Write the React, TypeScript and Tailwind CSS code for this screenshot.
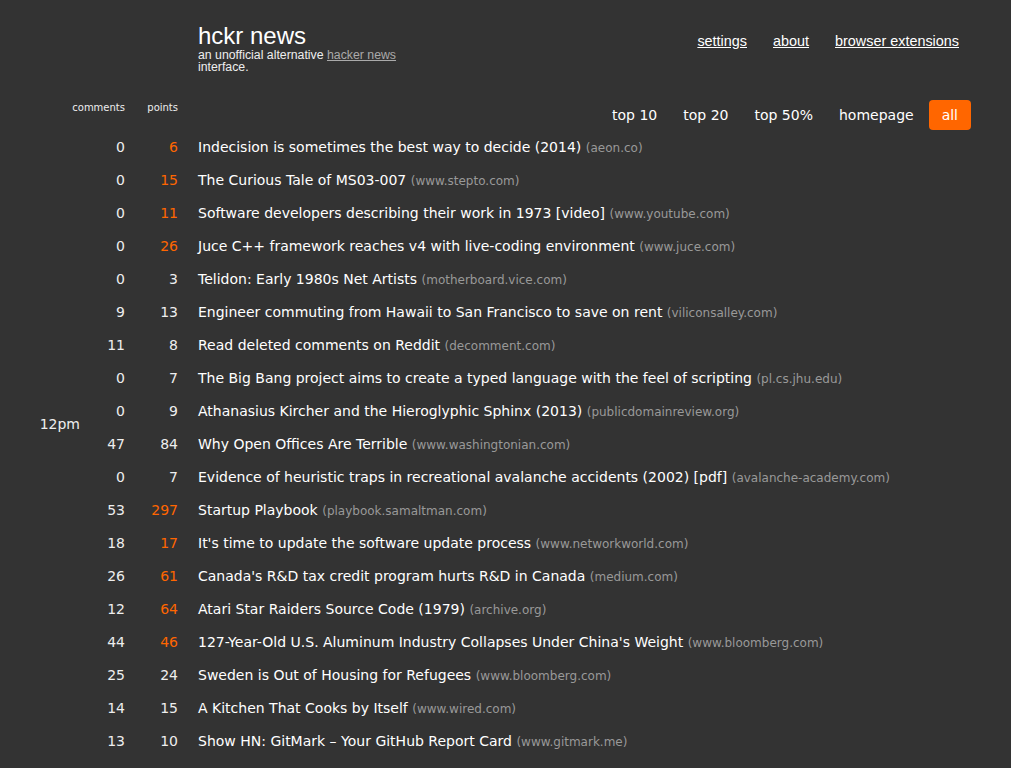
const stories = [
  { c: 0, p: 6, hot: true, t: "Indecision is sometimes the best way to decide (2014)", d: "aeon.co" },
  { c: 0, p: 15, hot: true, t: "The Curious Tale of MS03-007", d: "www.stepto.com" },
  { c: 0, p: 11, hot: true, t: "Software developers describing their work in 1973 [video]", d: "www.youtube.com" },
  { c: 0, p: 26, hot: true, t: "Juce C++ framework reaches v4 with live-coding environment", d: "www.juce.com" },
  { c: 0, p: 3, hot: false, t: "Telidon: Early 1980s Net Artists", d: "motherboard.vice.com" },
  { c: 9, p: 13, hot: false, t: "Engineer commuting from Hawaii to San Francisco to save on rent", d: "viliconsalley.com" },
  { c: 11, p: 8, hot: false, t: "Read deleted comments on Reddit", d: "decomment.com" },
  { c: 0, p: 7, hot: false, t: "The Big Bang project aims to create a typed language with the feel of scripting", d: "pl.cs.jhu.edu" },
  { c: 0, p: 9, hot: false, t: "Athanasius Kircher and the Hieroglyphic Sphinx (2013)", d: "publicdomainreview.org" },
  { c: 47, p: 84, hot: false, t: "Why Open Offices Are Terrible", d: "www.washingtonian.com" },
  { c: 0, p: 7, hot: false, t: "Evidence of heuristic traps in recreational avalanche accidents (2002) [pdf]", d: "avalanche-academy.com" },
  { c: 53, p: 297, hot: true, t: "Startup Playbook", d: "playbook.samaltman.com" },
  { c: 18, p: 17, hot: true, t: "It's time to update the software update process", d: "www.networkworld.com" },
  { c: 26, p: 61, hot: true, t: "Canada's R&D tax credit program hurts R&D in Canada", d: "medium.com" },
  { c: 12, p: 64, hot: true, t: "Atari Star Raiders Source Code (1979)", d: "archive.org" },
  { c: 44, p: 46, hot: true, t: "127-Year-Old U.S. Aluminum Industry Collapses Under China's Weight", d: "www.bloomberg.com" },
  { c: 25, p: 24, hot: false, t: "Sweden is Out of Housing for Refugees", d: "www.bloomberg.com" },
  { c: 14, p: 15, hot: false, t: "A Kitchen That Cooks by Itself", d: "www.wired.com" },
  { c: 13, p: 10, hot: false, t: "Show HN: GitMark \u2013 Your GitHub Report Card", d: "www.gitmark.me" },
];

const tabs = ["top 10", "top 20", "top 50%", "homepage", "all"];

export default function App() {
  return (
    <div className="flex h-[768px] overflow-hidden bg-white">
      <div className="w-[1011px] shrink-0 bg-[#333333] text-[#eeeeee] font-['DejaVu_Sans',sans-serif]">
        {/* Header */}
        <div className="flex items-start justify-between pl-[198px] pr-[52px] pt-[23px]">
          <div className="font-['Liberation_Sans',Arial,sans-serif]">
            <h1 className="text-[24px] leading-[26px] text-white">hckr news</h1>
            <p className="text-[12.3px] leading-[12px] text-[#eeeeee]">
              an unofficial alternative{" "}
              <a className="text-[#aaaaaa] underline">hacker news</a>
              <br />
              interface.
            </p>
          </div>
          <nav className="flex gap-[26px] pt-[10px] font-['Liberation_Sans',Arial,sans-serif] text-[14.4px] leading-[16px] text-white">
            <a className="underline">settings</a>
            <a className="underline">about</a>
            <a className="underline">browser extensions</a>
          </nav>
        </div>

        {/* Column labels + tabs */}
        <div className="mt-[27px] flex items-start pr-[40px]">
          <div className="flex pt-[2px] text-[10px] leading-[12px] text-[#eeeeee]">
            <div className="w-[125px] text-right">comments</div>
            <div className="w-[53px] text-right">points</div>
          </div>
          <div className="ml-auto flex items-center gap-[26px] text-[14px]">
            {tabs.map((t) =>
              t === "all" ? (
                <span key={t} className="-ml-[11px] rounded-[4px] bg-[#ff6600] px-[13px] py-[6px] leading-[18px] text-white">
                  {t}
                </span>
              ) : (
                <span key={t} className="text-white">{t}</span>
              )
            )}
          </div>
        </div>

        {/* Stories */}
        <div className="mt-[1px] grid grid-cols-[80px_45px_53px_1fr] auto-rows-[33px] items-center text-[14px]">
          <div className="col-start-1 row-start-9 row-span-2 -mt-[7px] text-right">12pm</div>
          {stories.map((s, i) => (
            <div key={i} className="contents">
              <div className="col-start-2 text-right" style={{ gridRowStart: i + 1 }}>{s.c}</div>
              <div
                className={s.hot ? "col-start-3 text-right text-[#ff6600]" : "col-start-3 text-right"}
                style={{ gridRowStart: i + 1 }}
              >
                {s.p}
              </div>
              <div className="col-start-4 whitespace-nowrap pl-[20px]" style={{ gridRowStart: i + 1 }}>
                <span className="text-white">{s.t}</span>{" "}
                <span className="text-[12px] text-[#999999]">({s.d})</span>
              </div>
            </div>
          ))}
        </div>
      </div>
    </div>
  );
}
